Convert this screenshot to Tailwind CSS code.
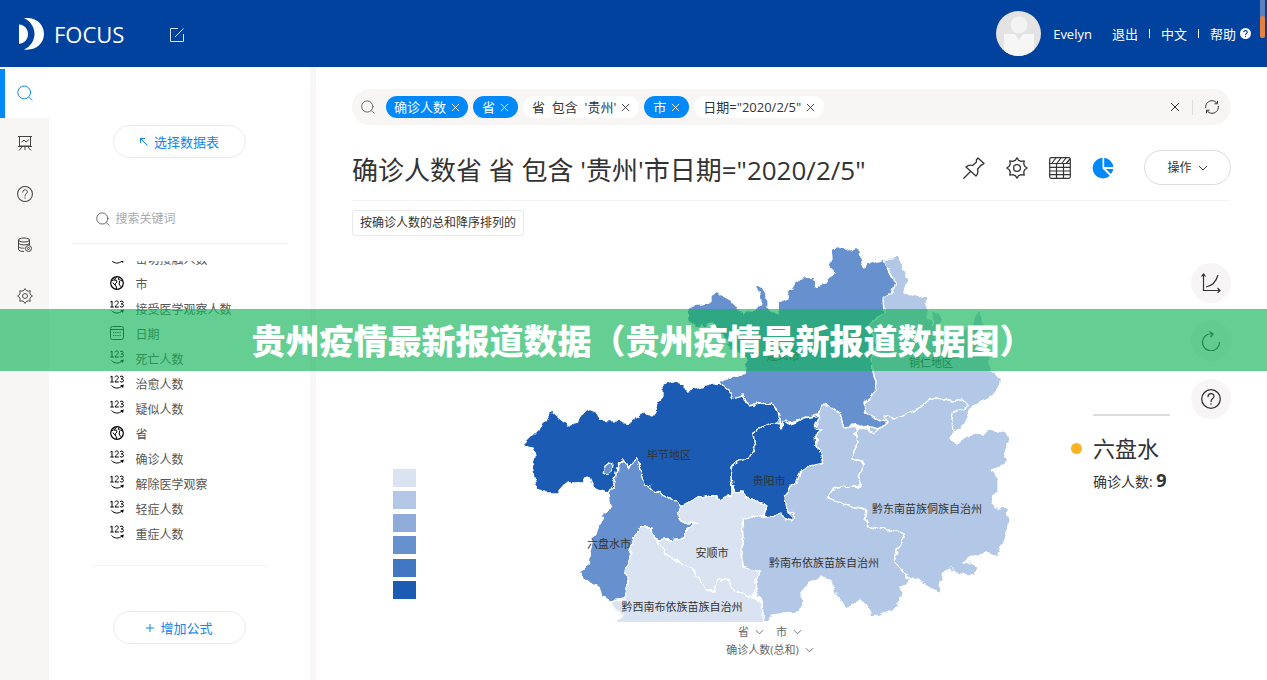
<!DOCTYPE html>
<html lang="zh-CN">
<head>
<meta charset="utf-8">
<meta name="viewport" content="width=device-width, initial-scale=1">
<title>FOCUS</title>
<script src="https://cdn.jsdelivr.net/npm/@tailwindcss/browser@4"></script>
</head>
<body class="relative flex min-h-screen flex-col overflow-x-hidden bg-white font-['Open_Sans','Noto_Sans_CJK_SC',sans-serif] text-[13px] leading-5 text-[#333]">

<!-- shared symbols -->
<svg class="hidden" aria-hidden="true">
  <symbol id="search" viewBox="0 0 16 16"><g fill="none" stroke="currentColor" stroke-linecap="round"><circle cx="7.2" cy="7.4" r="6.4"/><path d="M12 12.2l3 3"/></g></symbol>
  <symbol id="close" viewBox="0 0 10 10"><path d="M1 1l8 8M9 1l-8 8" fill="none" stroke="currentColor"/></symbol>
  <symbol id="down" viewBox="0 0 10 6"><path d="M1 1l4 4 4-4" fill="none" stroke="currentColor"/></symbol>
  <symbol id="help" viewBox="0 0 20 20"><g fill="none" stroke="currentColor" stroke-linecap="round"><circle cx="10" cy="10" r="9.3" stroke-width="1.3"/><path stroke-width="1.2" d="M7 7.7c0-4.100 6-4 6-.3C13 9.700 10 9.500 10 12.500"/></g><circle cx="10" cy="15" r=".8" fill="currentColor"/></symbol>
  <symbol id="gear" viewBox="0 0 22 22"><g fill="none" stroke="currentColor" stroke-width="1.300" stroke-linejoin="round"><circle cx="11" cy="11" r="3.400"/><path d="M9.300 3.300L11 .8l1.700 2.500 2.500 1 3-.5-.5 3 1 2.500 2.500 1.700-2.500 1.700-1 2.500.5 3-3-.5-2.500 1L11 21.200l-1.700-2.500-2.500-1-3 .5.5-3-1-2.500L.8 11l2.500-1.700 1-2.500-.5-3 3 .5z"/></g></symbol>
  <symbol id="num" viewBox="0 0 14 15"><g fill="none" stroke="currentColor"><path d="M.3 2.200L2 1v6M.3 7h3.500M5 2.300C5.300.3 8.400.5 8.300 2.500 8.200 4 6 5 5 7h3.800M10 1.800c1-1.300 3.300-.8 3.200.7 0 1-1 1.400-2 1.400 1.300 0 2.300.5 2.300 1.600 0 1.800-2.700 2-3.700.7M1.500 10.500c3 3.300 7.500 3.300 10.500.5"/></g><path d="M13.800 9.500l-3.600.9 2.800 2.700z" fill="currentColor"/></symbol>
  <symbol id="globe" viewBox="0 0 14 14"><g fill="none" stroke="currentColor"><circle cx="7" cy="7" r="6.300" stroke-width="1.200"/><path d="M1.200 5L3.500 4l3 .3L7 6 5.500 7.500 5.200 9 4 8.200 3 6.500M3.500 2.200L5 3.500 6.500 1.200M9 1.500L8.300 3.500l2.200.7 2.300 1M9.500 5l-.3 3 1.300 2.500M5 9l1.500 2-.3 2" /></g></symbol>
</svg>

<header class="relative flex h-[67px] shrink-0 items-center bg-[#01429f] pr-4 pl-[18px] text-white">
  <a href="#" class="flex items-center gap-[9px]">
    <svg class="h-8 w-[27px]" viewBox="0 0 27 32" fill="#fff"><path d="M1 6.500c12 1 12 18 0 19.500z"/><path d="M6 0c13-1 20 7 20 16S18 33 6 31.500C20 25 20 7 6 0z"/></svg>
    <span class="text-[22px] leading-8">FOCUS</span>
  </a>
  <button aria-label="编辑" class="ml-[45px] pt-0.5"><svg class="size-4" viewBox="0 0 16 16" fill="none" stroke="#dbe6f5"><path d="M9 1.500H1.500v13h13V7M6 10L14.500 1.500"/></svg></button>
  <div class="ml-auto flex items-center">
    <svg class="mr-3 size-[45px]" viewBox="0 0 45 45"><clipPath id="av"><circle cx="22.500" cy="22.500" r="22.500"/></clipPath><g clip-path="url(#av)"><path d="M0 0h45v45H0z" fill="#e3e3e3"/><circle cx="23" cy="14" r="8.500" fill="#f3f3f3"/><path d="M8 23h11l4 6 4-6h11v22H8z" fill="#f6f6f6"/></g></svg>
    <span>Evelyn</span>
    <a href="#" class="ml-5">退出</a>
    <span class="mx-[11px] h-[9px] w-px bg-white"></span>
    <a href="#">中文</a>
    <span class="mx-[11px] h-[9px] w-px bg-white"></span>
    <a href="#" class="flex items-center gap-1">帮助
      <svg class="size-[11px]" viewBox="0 0 12 12"><circle cx="6" cy="6" r="6" fill="#fff"/><path d="M4 4.700c0-2.500 4-2.400 4 0C8 6 6 6 6 7.500M6 8.500v1.200" fill="none" stroke="#01429f" stroke-width="1.200"/></svg></a>
  </div>
  <div class="absolute top-0 right-[2px] h-[38px] w-[5px] overflow-hidden rounded-b-sm bg-[#5c80bd]"><div class="mt-4 h-[22px] rounded-t-sm bg-[#e5823f]"></div></div>
</header>

<div class="flex grow">
  <nav class="flex w-[49px] shrink-0 flex-col bg-[#f7f6f4] text-[#444]">
    <a href="#" aria-label="搜索" class="mt-0.5 flex h-[49px] items-center justify-center border-l-[5px] border-[#0189f9] bg-white pr-1 pb-0.5 text-[#0f88ea]"><svg class="size-4"><use href="#search"/></svg></a>
    <a href="#" aria-label="看板" class="flex h-[51px] items-center justify-center pb-0.5"><svg class="size-4" viewBox="0 0 16 16" fill="none" stroke="currentColor"><path d="M1 1.500h14M2.500 1.500v9.500h11V1.500M4.500 7l2.500-2 2 2 3-2.500M1 11.500h14M8 11v4M5 12l-3 3.500M11 12l3 3.500"/></svg></a>
    <a href="#" aria-label="帮助" class="flex h-[51px] items-center justify-center pb-0.5"><svg class="size-4"><use href="#help"/></svg></a>
    <a href="#" aria-label="数据" class="flex h-[51px] items-center justify-center pb-0.5"><svg class="size-4" viewBox="0 0 16 16" fill="none" stroke="currentColor"><ellipse cx="7" cy="3" rx="5.500" ry="2"/><path d="M1.500 3v9.500c0 1 2.500 2 5.500 2M12.500 3v5M1.500 6c0 2.500 11 2.500 11 0M1.500 9.300c0 1.500 3 2 6 1.900"/><circle cx="11.500" cy="11.500" r="3"/><circle cx="11.500" cy="11.500" r="1"/></svg></a>
    <a href="#" aria-label="设置" class="flex h-[51px] items-center justify-center pb-0.5"><svg class="size-4"><use href="#gear"/></svg></a>
  </nav>

  <aside class="flex w-[267px] shrink-0 flex-col items-center border-r-[6px] border-[#f8f6f6] pt-[58px]">
    <button class="flex h-[33px] w-[133px] items-center justify-center gap-1.5 rounded-full border border-[#e8eaec] text-[#1185ea]">
      <svg class="size-2" viewBox="0 0 8 8" fill="none" stroke="currentColor"><path d="M.5 5V.5H5M.5.5l7 7"/></svg>选择数据表</button>
    <label class="mt-11 flex h-[42px] w-[216px] items-center gap-1.5 border-b border-[#efefef] pb-[7px] pl-6 text-[#555]">
      <svg class="size-[14px]"><use href="#search"/></svg>
      <input type="text" placeholder="搜索关键词" class="w-32 text-xs outline-none placeholder:text-[#aaa]">
    </label>
    <div class="mt-[17px] h-[305px] w-[174px] overflow-hidden border-b border-[#f3f3f3]">
      <ul class="-mt-[14px] pl-[17px] text-xs text-[#555]">
        <li class="flex h-[25px] items-center gap-3"><svg class="mb-1 h-[15px] w-[14px] text-black"><use href="#num"/></svg>密切接触人数</li>
        <li class="flex h-[25px] items-center gap-3"><svg class="mb-1 size-[14px] text-black"><use href="#globe"/></svg>市</li>
        <li class="flex h-[25px] items-center gap-3"><svg class="mb-1 h-[15px] w-[14px] text-black"><use href="#num"/></svg>接受医学观察人数</li>
        <li class="flex h-[25px] items-center gap-3"><svg class="mb-1 size-[14px] text-[#222]" viewBox="0 0 14 14" fill="none" stroke="currentColor"><rect x=".5" y=".5" width="13" height="13" rx="2"/><path d="M.5 3.500h13"/><path d="M3 6.500h8M3 9.500h8" stroke-dasharray="1.200 1"/></svg>日期</li>
        <li class="flex h-[25px] items-center gap-3"><svg class="mb-1 h-[15px] w-[14px] text-black"><use href="#num"/></svg>死亡人数</li>
        <li class="flex h-[25px] items-center gap-3"><svg class="mb-1 h-[15px] w-[14px] text-black"><use href="#num"/></svg>治愈人数</li>
        <li class="flex h-[25px] items-center gap-3"><svg class="mb-1 h-[15px] w-[14px] text-black"><use href="#num"/></svg>疑似人数</li>
        <li class="flex h-[25px] items-center gap-3"><svg class="mb-1 size-[14px] text-black"><use href="#globe"/></svg>省</li>
        <li class="flex h-[25px] items-center gap-3"><svg class="mb-1 h-[15px] w-[14px] text-black"><use href="#num"/></svg>确诊人数</li>
        <li class="flex h-[25px] items-center gap-3"><svg class="mb-1 h-[15px] w-[14px] text-black"><use href="#num"/></svg>解除医学观察</li>
        <li class="flex h-[25px] items-center gap-3"><svg class="mb-1 h-[15px] w-[14px] text-black"><use href="#num"/></svg>轻症人数</li>
        <li class="flex h-[25px] items-center gap-3"><svg class="mb-1 h-[15px] w-[14px] text-black"><use href="#num"/></svg>重症人数</li>
      </ul>
    </div>
    <button class="mt-[45px] flex h-[33px] w-[133px] items-center justify-center gap-1.5 rounded-full border border-[#e8eaec] text-[#1185ea]">
      <svg class="size-2" viewBox="0 0 8 8" fill="none" stroke="currentColor"><path d="M0 4h8M4 0v8"/></svg>增加公式</button>
  </aside>

  <main class="flex min-w-0 grow flex-col px-9 pt-[22px]">
    <div class="flex h-9 items-center rounded-full bg-[#f7f6f5] pr-3 pl-[9px]">
      <svg class="mr-[11px] size-[14px] text-[#555]"><use href="#search"/></svg>
      <div class="flex items-center gap-[5px] whitespace-pre">
        <button class="flex h-[22px] items-center gap-[5px] rounded-full bg-[#0189f9] px-2 text-white">确诊人数<svg class="size-[9px]"><use href="#close"/></svg></button>
        <button class="flex h-[22px] items-center gap-[5px] rounded-full bg-[#0189f9] px-[9px] text-white">省<svg class="size-[9px]"><use href="#close"/></svg></button>
        <button class="flex h-[22px] items-center gap-[5px] rounded-full bg-white px-[9px]">省  包含  '贵州'<svg class="size-[9px]"><use href="#close"/></svg></button>
        <button class="flex h-[22px] items-center gap-[5px] rounded-full bg-[#0189f9] px-[9px] text-white">市<svg class="size-[9px]"><use href="#close"/></svg></button>
        <button class="flex h-[22px] items-center gap-[5px] rounded-full bg-white px-[9px]">日期="2020/2/5"<svg class="size-[9px]"><use href="#close"/></svg></button>
      </div>
      <button aria-label="清空" class="ml-auto"><svg class="size-[10px]"><use href="#close"/></svg></button>
      <span class="mx-3 h-[15px] w-px bg-[#ddd]"></span>
      <button aria-label="刷新"><svg class="size-[14px]" viewBox="0 0 14 14" fill="none" stroke="currentColor"><path d="M.7 8C.3 3 4 .7 7 .7c2 0 3.800 1 5 2.600M13.300 6c.4 5-3.300 7.300-6.300 7.300-2 0-3.800-1-5-2.600M12.500.8v3H9.500M1.500 13.200v-3h3"/></svg></button>
    </div>

    <div class="mt-[18px] flex h-[58px] items-center border-b border-[#f3f3f3]">
      <h1 class="mb-1 text-[26px] leading-9 whitespace-nowrap">确诊人数省 省 包含 '贵州'市日期="2020/2/5"</h1>
      <div class="mb-2 ml-auto flex items-center gap-[21px]">
        <button aria-label="固定"><svg class="size-[22px]" viewBox="0 0 22 22" fill="none" stroke="currentColor" stroke-width="1.300" stroke-linejoin="round" stroke-linecap="round"><path d="M15 1l6 5.500-2 1.500-1 .2-3.500 4c.8 2.500.3 5-1.500 6.800L3 10c2-1.800 4.500-2.200 6.500-1.500L13.500 5l-.2-2zM7.500 14.500L.8 21.200"/></svg></button>
        <button aria-label="设置"><svg class="size-[22px]"><use href="#gear"/></svg></button>
        <button aria-label="表格"><svg class="size-[22px]" viewBox="0 0 22 22" fill="none" stroke="currentColor" stroke-width="1.200"><rect x=".7" y=".7" width="20.600" height="20.600" rx="1.500"/><path d="M.7 6.500h20.600M.7 10.300h20.600M.7 14h20.600M.7 17.700h20.600M7.500 6.500v14.800M14.500 6.500v14.800M3 6l4-5M8 6l4-5M13 6l4-5M17.500 6L21 2"/></svg></button>
        <button aria-label="图表" class="text-[#0189f9]"><svg class="size-[22px]" viewBox="0 0 22 22" fill="currentColor"><path d="M10.500.8V11.500l7.300 7.300A10.300 10.300 0 1 1 10.500.8z"/><path d="M12.200.8a10.300 10.300 0 0 1 9.100 9.200h-9.100z"/><path d="M13.800 12h7.500a10 10 0 0 1-2.500 5z"/></svg></button>
        <button class="ml-[9px] flex h-[35px] w-[87px] items-center justify-center gap-1.5 rounded-full border border-[#dcdcdc] text-xs">操作<svg class="h-[6px] w-[10px]"><use href="#down"/></svg></button>
      </div>
    </div>
    <div class="mt-[9px] flex"><span class="rounded-[3px] border border-[#e9e9e9] px-[7px] py-[2px] text-xs leading-5">按确诊人数的总和降序排列的</span></div>

    <section class="flex grow justify-between pt-[3px]">
      <div class="mt-[230px] ml-[41px] flex h-[130px] w-[23px] flex-col justify-between" aria-label="图例">
        <span class="h-[18px] bg-[#dae3f1]"></span>
        <span class="h-[18px] bg-[#b3c7e6]"></span>
        <span class="h-[18px] bg-[#8eabda]"></span>
        <span class="h-[18px] bg-[#6690ce]"></span>
        <span class="h-[18px] bg-[#4177c3]"></span>
        <span class="h-[18px] bg-[#1c5bb4]"></span>
      </div>

      <div class="ml-[94px] flex w-[520px] flex-col items-center text-[11px] text-[#666]">
        <svg class="h-[383px] w-full" viewBox="510 239 520 383" role="img" aria-label="贵州省地图">
          <filter id="coast" x="0" y="0" width="1" height="1" color-interpolation-filters="sRGB"><feTurbulence type="fractalNoise" baseFrequency=".12" numOctaves="2" seed="4"/><feDisplacementMap in="SourceGraphic" scale="7" xChannelSelector="R" yChannelSelector="G"/></filter>
          <g filter="url(#coast)" stroke="#fff" stroke-width="1.300" stroke-linejoin="round">
            <path d="M510 239h520v393H510z" fill="none" stroke="none"/>
            <!-- 铜仁 -->
            <path fill="#b3c7e6" d="M883 258L890 258 900 257 903 268 908 280 905 293 918 298 928 295 927 308 927 317 933 325 932 317 933 309 940 312 942 320 938 328 943 335 957 332 972 327 975 315 979 308 983 322 985 332 983 342 990 352 990 368 1001 380 997 392 988 398 973 405 968 417 960 430 953 432 930 440 870 440 865 413 864 403 875 393 876 382 873 372 872 358 877 345 869 323 877 317 884 313 883 299 891 294 895 283 888 270z"/>
            <!-- 黔东南 -->
            <path fill="#b3c7e6" d="M953 432L950 437 958 443 973 433 982 435 990 430 1005 432 1010 442 1003 452 1007 460 1000 467 991 470 998 480 998 490 991 503 997 508 1007 507 1009 522 1005 537 997 557 987 553 973 555 963 562 973 562 977 568 973 576 955 573 950 568 942 575 939 595 930 587 918 580 912 579 903 572 895 563 897 550 905 537 903 532 887 530 870 527 865 520 867 510 848 505 828 498 832 490 847 487 862 485 858 477 864 463 853 460 852 455 858 443 856 433 858 428 875 433 880 430 887 423 884 417 897 418 913 412 927 400 937 398 947 400 963 400 967 407 953 412 952 420z"/>
            <!-- 黔南 -->
            <path fill="#b3c7e6" d="M858 428L844 427 840 413 830 407 823 405 820 415 815 427 822 430 816 435 817 447 823 462 810 465 800 472 798 480 790 487 785 498 787 510 792 513 792 522 780 514 773 516 765 517 755 516 742 520 743 537 741 552 743 567 760 572 755 587 762 603 763 622 767 622 773 615 793 613 803 607 802 592 810 582 822 577 832 583 833 592 840 600 847 608 860 600 868 607 873 617 898 608 902 588 912 579 903 572 895 563 897 550 905 537 903 532 887 530 870 527 865 520 867 510 848 505 828 498 832 490 847 487 862 485 858 477 864 463 853 460 852 455 858 443 856 433z"/>
            <!-- 遵义 -->
            <path fill="#6690ce" d="M718 383L727 379 743 375 745 368 745 358 730 348 713 323 695 327 688 320 687 311 693 305 701 305 710 303 710 297 716 291 720 295 727 297 735 306 743 310 745 314 750 309 756 309 760 303 759 295 755 284 761 287 767 297 767 307 772 311 778 313 779 303 788 299 786 290 793 288 799 278 813 277 816 286 826 283 835 272 829 267 832 258 831 249 843 247 847 250 859 248 860 259 864 267 873 262 883 258 888 270 895 283 891 294 883 299 884 313 877 317 869 323 870 332 877 345 872 358 873 372 876 382 875 393 864 403 865 413 877 418 887 423 880 430 870 428 862 425 844 427 840 413 830 407 823 405 820 415 804 418 790 422 780 425 776 410 772 402 760 404 748 406 743 395 733 398 728 390z"/>
            <!-- 毕节 -->
            <path fill="#1c5bb4" d="M718 383L700 387 688 390 683 385 673 381 663 384 663 395 657 403 653 416 643 413 627 423 617 422 600 421 595 413 585 409 578 420 570 426 560 418 551 410 545 422 532 435 522 445 533 447 536 458 532 467 535 483 543 493 558 493 567 483 583 483 588 476 593 487 608 493 615 482 617 468 623 460 628 467 637 457 645 485 663 495 677 502 681 507 697 498 717 494 718 500 732 495 732 485 730 467 748 458 755 448 753 433 767 425 777 422 780 425 776 410 772 402 760 404 748 406 743 395 733 398 728 390z"/>
            <!-- 贵阳 -->
            <path fill="#1c5bb4" d="M820 415L804 418 792 425 787 420 780 428 777 422 767 425 753 433 755 448 748 458 730 467 732 485 735 492 743 491 748 498 763 503 767 506 764 517 773 516 780 514 792 522 792 513 787 510 785 498 790 487 798 480 800 472 810 465 823 462 817 447 816 435 822 430 815 427z"/>
            <!-- 六盘水 -->
            <path fill="#6690ce" d="M608 493L610 507 602 515 598 530 593 537 589 557 588 565 580 572 583 578 590 583 600 586 602 597 612 601 625 599 628 583 626 573 628 560 632 543 640 527 652 527 653 537 657 541 680 539 687 533 687 527 697 524 682 522 677 515 681 507 677 502 663 495 645 485 637 457 628 467 623 460 617 468 615 482z"/>
            <!-- 安顺 -->
            <path fill="#dae3f1" d="M681 507L677 515 682 522 697 524 687 527 687 533 680 539 657 541 670 557 693 570 707 590 715 592 718 578 728 580 730 587 750 598 755 587 760 572 743 567 741 552 743 537 742 520 755 516 764 517 767 506 763 503 748 498 743 491 735 492 732 485 732 495 718 500 717 494 697 498z"/>
            <!-- 黔西南 -->
            <path fill="#dae3f1" d="M657 541L653 537 652 527 640 527 632 543 628 560 626 573 628 583 625 599 612 601 613 608 622 615 612 625 764 625 762 603 750 598 730 587 728 580 718 578 715 592 707 590 693 570 670 557z"/>
            <path fill="#6690ce" d="M609 463l4 1-1 7-5 4-4-2 2-7z"/>
          </g>
          <g class="fill-[#333] text-[11px]" text-anchor="middle">
            <text x="783" y="360">遵义市</text><text x="931" y="367">铜仁地区</text>
            <text x="669" y="459">毕节地区</text><text x="769" y="485">贵阳市</text>
            <text x="609" y="548">六盘水市</text><text x="712" y="557">安顺市</text>
            <text x="927" y="513">黔东南苗族侗族自治州</text><text x="824" y="567">黔南布依族苗族自治州</text>
            <text x="682" y="611">黔西南布依族苗族自治州</text>
          </g>
        </svg>
        <div class="flex gap-3 leading-5">
          <button class="flex items-center gap-1.5">省<svg class="h-[6px] w-[9px]"><use href="#down"/></svg></button>
          <button class="flex items-center gap-1.5">市<svg class="h-[6px] w-[9px]"><use href="#down"/></svg></button>
        </div>
        <button class="flex items-center gap-1.5 leading-4">确诊人数(总和)<svg class="h-[6px] w-[9px]"><use href="#down"/></svg></button>
      </div>

      <div class="ml-10 flex grow justify-between">
        <div class="mt-[175px] pl-[23px]">
          <div class="w-[77px] border-t-2 border-[#ddd]"></div>
          <div class="relative mt-4 text-[22px] leading-8"><span class="absolute top-[11px] -left-[22px] size-[11px] rounded-full bg-[#fcb322]"></span>六盘水</div>
          <div class="text-sm leading-8 whitespace-nowrap">确诊人数: <b class="text-lg leading-8">9</b></div>
        </div>
        <div class="mt-6 flex flex-col gap-[18px]">
          <button aria-label="坐标轴" class="flex size-10 items-center justify-center rounded-full bg-[#f7f5f5]"><svg class="size-5" viewBox="0 0 20 20" fill="none" stroke="currentColor" stroke-width="1.200"><path d="M2.500 1.500v16H19M.5 3.500l2-2.500 2 2.500M16.500 15l2.500 2.500-2.500 2.500M5 14c6-1 10-5 12-12"/></svg></button>
          <button aria-label="重置" class="flex size-10 items-center justify-center rounded-full bg-[#f7f5f5]"><svg class="size-5" viewBox="0 0 20 20" fill="none" stroke="currentColor" stroke-width="1.200"><path d="M18.500 11A8.500 8.500 0 1 1 12 3M8.500.5l3.500 2.500-2.500 3"/></svg></button>
          <button aria-label="帮助" class="flex size-10 items-center justify-center rounded-full bg-[#f7f5f5]"><svg class="size-5"><use href="#help"/></svg></button>
        </div>
      </div>
    </section>
  </main>
</div>

<!-- headline banner over the page -->
<div class="absolute inset-x-0 top-[309px] flex h-[62px] items-center justify-center bg-[#12b459]/65 pl-[18px] font-['Noto_Sans_CJK_SC',sans-serif] text-[34px] leading-[62px] font-black whitespace-nowrap text-white">贵州疫情最新报道数据（贵州疫情最新报道数据图）</div>
</body>
</html>
